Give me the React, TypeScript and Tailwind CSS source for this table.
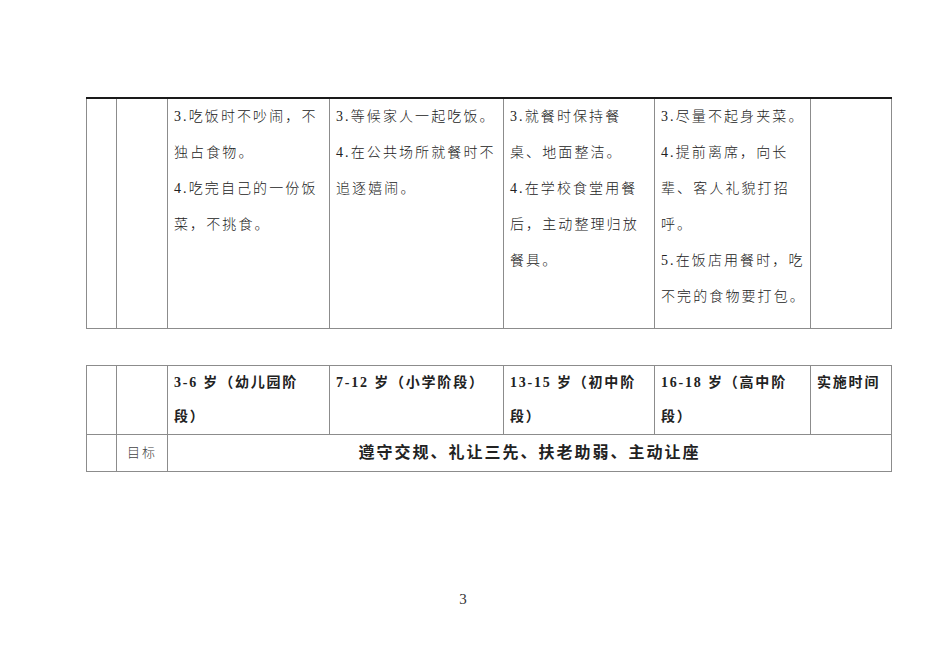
const serif = "font-['Liberation_Serif','Noto_Sans_CJK_SC',serif]";

type Col = { w: string };

const cols: Col[] = [
  { w: "w-[30px]" },
  { w: "w-[51px]" },
  { w: "w-[162px]" },
  { w: "w-[174px]" },
  { w: "w-[151px]" },
  { w: "w-[156px]" },
  { w: "w-[81px]" },
];

const rules: string[][] = [
  ["3.吃饭时不吵闹，不", "独占食物。", "4.吃完自己的一份饭", "菜，不挑食。"],
  ["3.等候家人一起吃饭。", "4.在公共场所就餐时不", "追逐嬉闹。"],
  ["3.就餐时保持餐", "桌、地面整洁。", "4.在学校食堂用餐", "后，主动整理归放", "餐具。"],
  ["3.尽量不起身夹菜。", "4.提前离席，向长", "辈、客人礼貌打招", "呼。", "5.在饭店用餐时，吃", "不完的食物要打包。"],
];

const stages: string[][] = [
  ["3-6 岁（幼儿园阶", "段）"],
  ["7-12 岁（小学阶段）"],
  ["13-15 岁（初中阶", "段）"],
  ["16-18 岁（高中阶", "段）"],
];

function Lines({ lines }: { lines: string[] }) {
  return (
    <>
      {lines.map((l, i) => (
        <div key={i} className="whitespace-nowrap">
          {l}
        </div>
      ))}
    </>
  );
}

const cell = "border border-[#8c8c8c] p-0";
const top = "border-t-2 border-t-[#1a1a1a]";
const head = "align-top pl-[6px] text-[14px] leading-[34px] font-bold tracking-[1.8px]";

export default function App() {
  return (
    <div className={`w-[950px] h-[672px] bg-white text-[#222] ${serif} pt-[97px] pl-[86px]`}>
      <table className="border-collapse table-fixed w-[805px]">
        <colgroup>
          {cols.map((c, i) => (
            <col key={i} className={c.w} />
          ))}
        </colgroup>
        <tbody>
          <tr className="h-[230px]">
            <td className={`${cell} ${top}`}></td>
            <td className={`${cell} ${top}`}></td>
            {rules.map((r, i) => (
              <td
                key={i}
                className={`${cell} ${top} align-top pl-[6px] text-[14px] leading-[36px] tracking-[2.1px] font-light`}
              >
                <Lines lines={r} />
              </td>
            ))}
            <td className={`${cell} ${top}`}></td>
          </tr>
        </tbody>
      </table>

      <table className="border-collapse table-fixed w-[805px] mt-[36px]">
        <colgroup>
          {cols.map((c, i) => (
            <col key={i} className={c.w} />
          ))}
        </colgroup>
        <tbody>
          <tr className="h-[69px]">
            <td className={cell}></td>
            <td className={cell}></td>
            {stages.map((s, i) => (
              <td key={i} className={`${cell} ${head}`}>
                <Lines lines={s} />
              </td>
            ))}
            <td className={`${cell} ${head}`}>实施时间</td>
          </tr>
          <tr className="h-[37px]">
            <td className={cell}></td>
            <td className={`${cell} align-middle text-center text-[13px] tracking-[2px] text-[#444] font-light`}>
              目标
            </td>
            <td
              colSpan={5}
              className={`${cell} align-middle text-center text-[16px] leading-[20px] font-bold tracking-[2px]`}
            >
              遵守交规、礼让三先、扶老助弱、主动让座
            </td>
          </tr>
        </tbody>
      </table>

      <div className="w-[754px] text-center mt-[116px] text-[15px] text-[#333]">3</div>
    </div>
  );
}
